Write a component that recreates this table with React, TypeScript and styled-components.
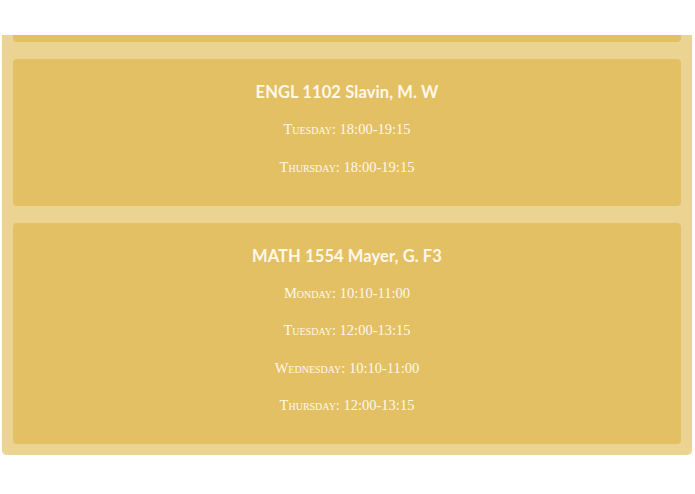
import React from "react";
import styled, { createGlobalStyle } from "styled-components";

const Global = createGlobalStyle`
  html, body { margin: 0; padding: 0; background: #ffffff; }
  * { box-sizing: border-box; }
`;

const Page = styled.div`
  padding: 35px 3px 0 2px;
`;

const Board = styled.section`
  background: #ebd492;
  padding: 0 11px 11px;
  border-radius: 0 0 5px 5px;
  display: flex;
  flex-direction: column;
  gap: 17px;
  box-shadow: 0 1px 2px rgba(200, 170, 80, 0.15);
`;

const CardStub = styled.div`
  height: 7px;
  background: #e3c064;
  border-radius: 0 0 4px 4px;
`;

const Card = styled.article`
  background: #e3c064;
  border-radius: 4px;
  padding: 21px 0 28px;
  display: flex;
  flex-direction: column;
  align-items: center;
  gap: 15.5px;
  color: #fff8e8;
`;

const Title = styled.h3`
  margin: 0 0 -1.5px;
  font-family: "Lato", "Open Sans", sans-serif;
  font-weight: 700;
  font-size: 16.5px;
  line-height: 24px;
  letter-spacing: 0.1px;
`;

const Slot = styled.p`
  margin: 0;
  font-family: "Liberation Serif", "DejaVu Serif", serif;
  font-variant: small-caps;
  font-size: 14.5px;
  line-height: 22px;
`;

const courses = [
  {
    title: "ENGL 1102 Slavin, M. W",
    slots: ["Tuesday: 18:00-19:15", "Thursday: 18:00-19:15"],
  },
  {
    title: "MATH 1554 Mayer, G. F3",
    slots: [
      "Monday: 10:10-11:00",
      "Tuesday: 12:00-13:15",
      "Wednesday: 10:10-11:00",
      "Thursday: 12:00-13:15",
    ],
  },
];

export default function App() {
  return (
    <>
      <Global />
      <Page>
        <Board>
          <CardStub />
          {courses.map((c) => (
            <Card key={c.title}>
              <Title>{c.title}</Title>
              {c.slots.map((s) => (
                <Slot key={s}>{s}</Slot>
              ))}
            </Card>
          ))}
        </Board>
      </Page>
    </>
  );
}
